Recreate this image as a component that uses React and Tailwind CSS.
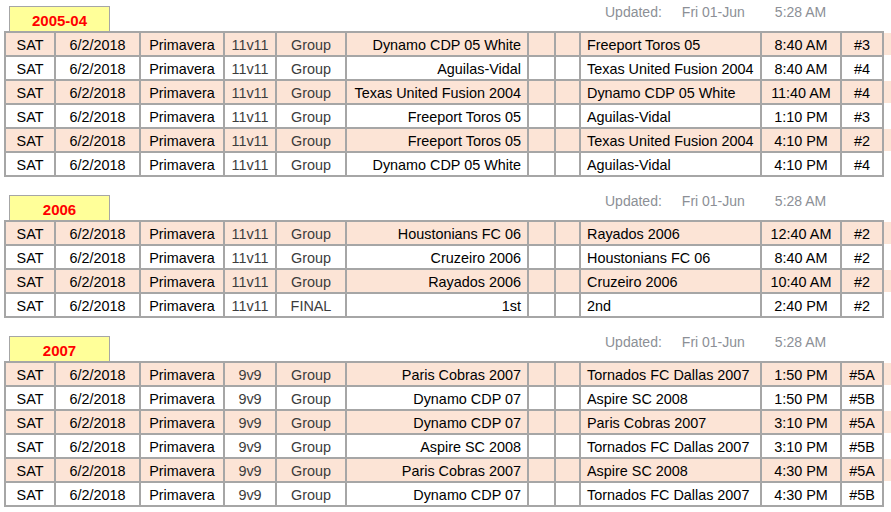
import React from "react";

const sections = [
  {
    label: "2005-04",
    games: [
      ["11v11", "Group", "Dynamo CDP 05 White", "Freeport Toros 05", "8:40 AM", "#3"],
      ["11v11", "Group", "Aguilas-Vidal", "Texas United Fusion 2004", "8:40 AM", "#4"],
      ["11v11", "Group", "Texas United Fusion 2004", "Dynamo CDP 05 White", "11:40 AM", "#4"],
      ["11v11", "Group", "Freeport Toros 05", "Aguilas-Vidal", "1:10 PM", "#3"],
      ["11v11", "Group", "Freeport Toros 05", "Texas United Fusion 2004", "4:10 PM", "#2"],
      ["11v11", "Group", "Dynamo CDP 05 White", "Aguilas-Vidal", "4:10 PM", "#4"],
    ],
  },
  {
    label: "2006",
    games: [
      ["11v11", "Group", "Houstonians FC 06", "Rayados 2006", "12:40 AM", "#2"],
      ["11v11", "Group", "Cruzeiro 2006", "Houstonians FC 06", "8:40 AM", "#2"],
      ["11v11", "Group", "Rayados 2006", "Cruzeiro 2006", "10:40 AM", "#2"],
      ["11v11", "FINAL", "1st", "2nd", "2:40 PM", "#2"],
    ],
  },
  {
    label: "2007",
    games: [
      ["9v9", "Group", "Paris Cobras 2007", "Tornados FC Dallas 2007", "1:50 PM", "#5A"],
      ["9v9", "Group", "Dynamo CDP 07", "Aspire SC 2008", "1:50 PM", "#5B"],
      ["9v9", "Group", "Dynamo CDP 07", "Paris Cobras 2007", "3:10 PM", "#5A"],
      ["9v9", "Group", "Aspire SC 2008", "Tornados FC Dallas 2007", "3:10 PM", "#5B"],
      ["9v9", "Group", "Paris Cobras 2007", "Aspire SC 2008", "4:30 PM", "#5A"],
      ["9v9", "Group", "Dynamo CDP 07", "Tornados FC Dallas 2007", "4:30 PM", "#5B"],
    ],
  },
];

const cell = "h-[22px] leading-[24px] border-r-2 border-[#a6a6a6] shrink-0 whitespace-nowrap overflow-hidden";

const GameRow = ({ game, shaded }) => {
  const [size, round, home, away, time, field] = game;
  const bg = shaded ? "bg-[#fce4d6]" : "";
  return (
    <div className="flex">
      <div className={`flex w-[880px] border-b-2 border-l-2 border-[#a6a6a6] ${bg}`}>
        <div className={`${cell} w-[50px] text-center`}>SAT</div>
        <div className={`${cell} w-[85px] text-center`}>6/2/2018</div>
        <div className={`${cell} w-[84px] text-center`}>Primavera</div>
        <div className={`${cell} w-[52px] text-center text-[#3c3c3c]`}>{size}</div>
        <div className={`${cell} w-[70px] text-center text-[#3c3c3c]`}>{round}</div>
        <div className={`${cell} w-[182px] text-right pr-[6px]`}>{home}</div>
        <div className={`${cell} w-[27px]`}></div>
        <div className={`${cell} w-[25px]`}></div>
        <div className={`${cell} w-[181px] pl-[6px]`}>{away}</div>
        <div className={`${cell} w-[80px] text-center`}>{time}</div>
        <div className={`${cell} w-[42px] text-center`}>{field}</div>
      </div>
      <div className={`flex-1 h-[22px] ${bg}`}></div>
    </div>
  );
};

const Section = ({ label, games }) => (
  <div className="flex flex-col">
    <div className="flex h-[25px]">
      <div className="ml-[9px] w-[101px] border border-b-0 border-[#a6a6a6] bg-[#ffff99] text-center text-[#ff0000] text-[15px] font-bold leading-[28px]">
        {label}
      </div>
      <div className="flex -mt-[3px] h-[18px] leading-[18px] text-[14px] text-[#8c8f96]">
        <span className="ml-[495px]">Updated:</span>
        <span className="ml-[20px]">Fri 01-Jun</span>
        <span className="ml-[30px]">5:28 AM</span>
      </div>
    </div>
    <div className="ml-[4px] w-[880px] h-[2px] bg-[#a6a6a6]"></div>
    <div className="ml-[4px]">
      {games.map((g, i) => (
        <GameRow key={i} game={g} shaded={i % 2 === 0} />
      ))}
    </div>
  </div>
);

export default function App() {
  return (
    <div
      className="w-[891px] h-[512px] bg-white text-black text-[14.4px] pt-[6px] flex flex-col gap-[18px] overflow-hidden"
      style={{ fontFamily: '"Liberation Sans", Arial, sans-serif' }}
    >
      {sections.map((s) => (
        <Section key={s.label} label={s.label} games={s.games} />
      ))}
    </div>
  );
}
